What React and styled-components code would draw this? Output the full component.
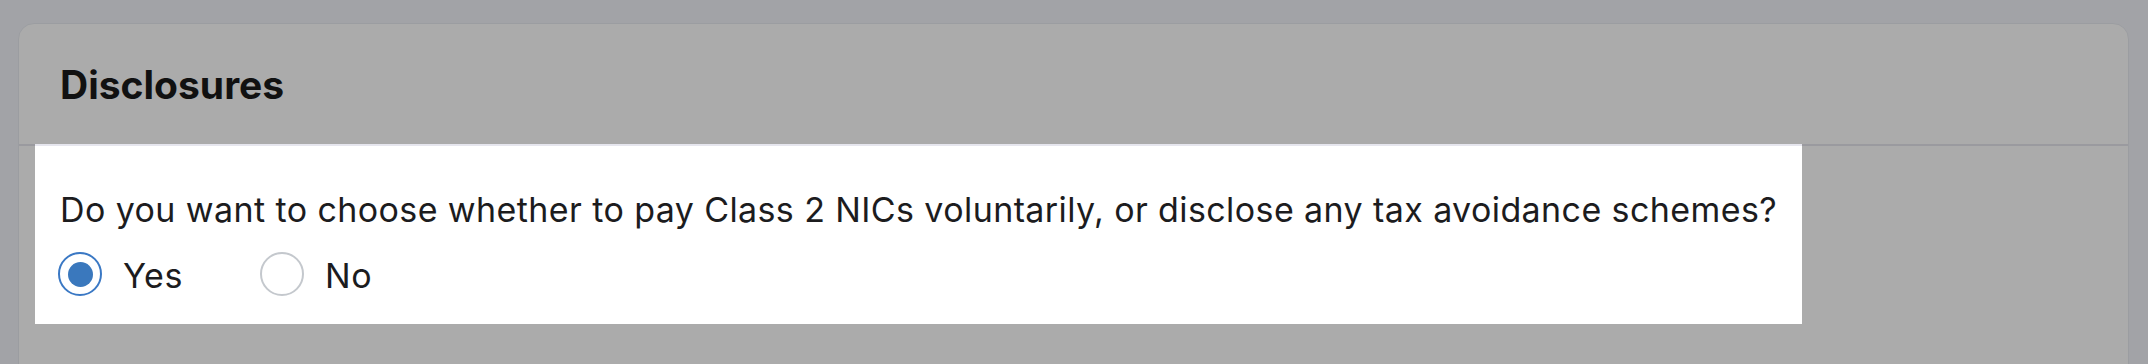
import React, { useState } from 'react';
import styled, { createGlobalStyle } from 'styled-components';

const GlobalStyle = createGlobalStyle`
  html, body {
    margin: 0;
  }

  body {
    background: #f2f4fa;
    font-family: Inter, "Noto Sans", sans-serif;
    color: #1c1c1e;
  }
`

const Page = styled.div`
  height: 100vh;
  overflow: hidden;
  padding: 23px 19px 0 18px;
  box-sizing: border-box;
`

const Card = styled.section`
  min-height: 420px;
  background: #fff;
  border: 1px solid #e8ebf1;
  border-radius: 16px;
`

const CardHeader = styled.header`
  display: flex;
  align-items: center;
  height: 120px;
  padding: 0 41px;
  border-bottom: 2px solid #e6e6ee;
`

const Title = styled.h2`
  margin: 0;
  font-size: 39px;
  line-height: 39px;
  font-weight: 700;
  color: #1a1a1a;
`

const CardBody = styled.div`
  display: flex;
  align-items: flex-start;
  padding: 0 16px;
`

// the highlighted field, everything around it is dimmed by the shadow
const Spotlight = styled.div`
  position: relative;
  z-index: 1;
  margin-top: -2px;
  padding: 46px 25px 28px;
  box-shadow: 0 0 0 3000px rgba(0, 0, 0, 0.33);
`

const Question = styled.p`
  margin: 0 0 22px;
  font-size: 34px;
  line-height: 40px;
  letter-spacing: 0.4px;
`

const RadioGroup = styled.div`
  display: flex;
  align-items: center;
  gap: 77px;
`

const Option = styled.label`
  display: flex;
  align-items: center;
  gap: 21px;
  cursor: pointer;

  > input {
    display: none;
  }
`

const Circle = styled.span`
  display: grid;
  place-items: center;
  width: 44px;
  height: 44px;
  margin-left: ${p => p.$first ? '-2px' : '0'};
  box-sizing: border-box;
  border-radius: 50%;
  border: ${p => p.$checked ? '2.5px solid #3a78c4' : '2px solid #c4c8cd'};
  background: #fff;

  &::after {
    content: '';
    display: ${p => p.$checked ? 'block' : 'none'};
    width: 25px;
    height: 25px;
    border-radius: 50%;
    background: #3a78bd;
  }
`

const OptionText = styled.span`
  padding-top: 3px;
  font-size: 34px;
  line-height: 40px;
  letter-spacing: 0.6px;
`

const options = ['Yes', 'No'];

export default function App() {
  const [value, setValue] = useState('Yes');

  return (
    <>
      <GlobalStyle />
      <Page>
        <Card>
          <CardHeader>
            <Title>Disclosures</Title>
          </CardHeader>
          <CardBody>
            <Spotlight>
              <Question>
                Do you want to choose whether to pay Class 2 NICs voluntarily, or disclose any tax avoidance schemes?
              </Question>
              <RadioGroup>
                {options.map((opt, i) => (
                  <Option key={opt}>
                    <input
                      type="radio"
                      name="disclosures"
                      checked={value === opt}
                      onChange={() => setValue(opt)}/>
                    <Circle $checked={value === opt} $first={i === 0}/>
                    <OptionText>{opt}</OptionText>
                  </Option>
                ))}
              </RadioGroup>
            </Spotlight>
          </CardBody>
        </Card>
      </Page>
    </>
  );
}
